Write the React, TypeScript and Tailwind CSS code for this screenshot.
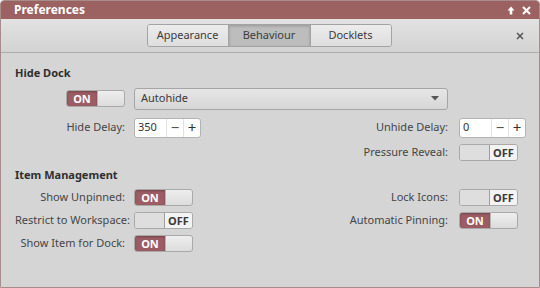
const font = { fontFamily: '"Noto Sans", "Open Sans", "DejaVu Sans", sans-serif' };

const Switch = ({ on }: { on: boolean }) => (
  <div className="flex h-[17px] w-[59px] overflow-hidden rounded-[3px] border border-[#a9a9a9] bg-gradient-to-b from-[#eeeeee] to-[#dcdcdc] text-[11px] font-bold leading-none">
    {on ? (
      <>
        <div className="flex w-[30px] items-center justify-center bg-[#9b5c63] text-white shadow-[inset_0_1px_2px_rgba(0,0,0,0.25)]">ON</div>
        <div className="flex-1 border-l border-[#b5b5b5]" />
      </>
    ) : (
      <>
        <div className="w-[29px] bg-[#dedede]" />
        <div className="flex flex-1 items-center justify-center border-l border-[#9e9e9e] bg-[#f3f3f3] text-[#3a3a3a]">OFF</div>
      </>
    )}
  </div>
);

const Spin = ({ value }: { value: string }) => (
  <div className="flex h-[20px] w-[67px] items-stretch overflow-hidden rounded-[3px] border border-[#b3b3b3] bg-white text-[11px] text-[#333]">
    <div className="flex flex-1 items-center pl-[3px]">{value}</div>
    <div className="flex w-[17px] items-center justify-center border-l border-[#e2e2e2] text-[15px] text-[#555]">−</div>
    <div className="flex w-[17px] items-center justify-center border-l border-[#e2e2e2] text-[15px] text-[#333]">+</div>
  </div>
);

const Label = ({ children }: { children: React.ReactNode }) => (
  <div className="whitespace-nowrap text-right text-[11px] text-[#454545]">{children}</div>
);

const Header = ({ children }: { children: React.ReactNode }) => (
  <div className="pl-[14px] text-[11px] font-bold text-[#2f2f2f]">{children}</div>
);

export default function App() {
  return (
    <div style={font} className="flex h-[288px] w-[540px] flex-col overflow-hidden rounded-t-[4px] border border-[#a88c8c] bg-[#d5d5d5]">
      <div className="flex h-[18px] shrink-0 items-center justify-between bg-[#9c6262] pl-[13px] pr-[8px] text-white">
        <span className="text-[12px] font-bold">Preferences</span>
        <div className="flex items-center gap-[7px]">
          <svg width="8" height="9" viewBox="0 0 8 9"><path d="M4 0.5 L7.5 4.5 H5.3 V8.5 H2.7 V4.5 H0.5 Z" fill="white" /></svg>
          <svg width="9" height="9" viewBox="0 0 9 9"><path d="M1 1 L8 8 M8 1 L1 8" stroke="white" strokeWidth="2" /></svg>
        </div>
      </div>
      <div className="relative flex h-[34px] shrink-0 items-center justify-center border-b border-[#adadad] bg-gradient-to-b from-[#e2e2e2] to-[#d3d3d3]">
        <div className="ml-[-2px] flex h-[23px] overflow-hidden rounded-[3px] border border-[#a3a3a3] text-[11px] text-[#3c3c3c]">
          <div className="flex w-[80px] items-center justify-center bg-gradient-to-b from-[#ececec] to-[#dedede]">Appearance</div>
          <div className="flex w-[83px] items-center justify-center border-x border-[#a3a3a3] bg-[#bdbdbd] shadow-[inset_0_1px_3px_rgba(0,0,0,0.2)]">Behaviour</div>
          <div className="flex w-[80px] items-center justify-center bg-gradient-to-b from-[#ececec] to-[#dedede]">Docklets</div>
        </div>
        <svg className="absolute right-[15px] top-[13px]" width="8" height="8" viewBox="0 0 8 8"><path d="M1 1 L7 7 M7 1 L1 7" stroke="#555" strokeWidth="1.5" /></svg>
      </div>

      <div className="flex flex-col pt-[12px]">
        <Header>Hide Dock</Header>
        <div className="mt-[6px] grid grid-cols-[110px_67px_1fr_66px] items-center gap-x-[9px] pl-[14px] pr-[14px]">
          <div className="flex h-[22px] items-center justify-end"><Switch on /></div>
          <div className="col-span-2 mr-[2px] flex h-[22px] items-center justify-between rounded-[3px] border border-[#a5a5a5] bg-gradient-to-b from-[#e6e6e6] to-[#d6d6d6] pl-[6px] pr-[8px] text-[11px] text-[#3a3a3a]">
            <span>Autohide</span>
            <svg width="8" height="5" viewBox="0 0 8 5"><path d="M0 0 H8 L4 4.5 Z" fill="#555" /></svg>
          </div>
          <div />

          <div className="mt-[8px]"><Label>Hide Delay:</Label></div>
          <div className="mt-[8px]"><Spin value="350" /></div>
          <div className="mt-[8px] pr-[2px]"><Label>Unhide Delay:</Label></div>
          <div className="mt-[8px]"><Spin value="0" /></div>

          <div className="mt-[6px]" />
          <div className="mt-[6px]" />
          <div className="mt-[6px] pr-[2px]"><Label>Pressure Reveal:</Label></div>
          <div className="mt-[6px]"><Switch on={false} /></div>
        </div>

        <div className="mt-[6px]"><Header>Item Management</Header></div>
        <div className="mt-[6px] grid grid-cols-[110px_67px_1fr_66px] items-center gap-x-[9px] gap-y-[6px] pl-[14px] pr-[14px]">
          <Label>Show Unpinned:</Label>
          <Switch on />
          <div className="pr-[2px]"><Label>Lock Icons:</Label></div>
          <Switch on={false} />

          <Label>Restrict to Workspace:</Label>
          <Switch on={false} />
          <div className="pr-[2px]"><Label>Automatic Pinning:</Label></div>
          <Switch on />

          <Label>Show Item for Dock:</Label>
          <Switch on />
          <div />
          <div />
        </div>
      </div>
    </div>
  );
}
